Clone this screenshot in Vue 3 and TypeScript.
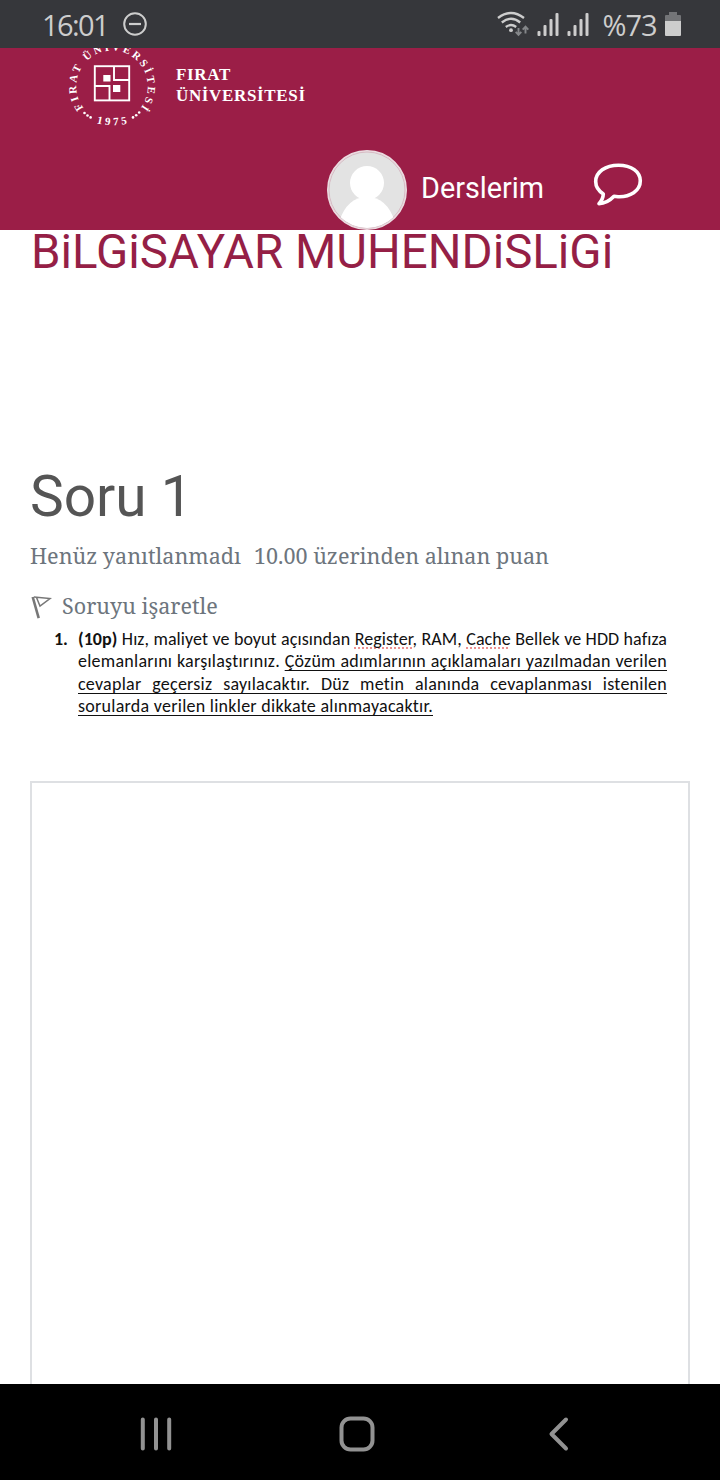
<script setup lang="ts">
const underlinedLines: string[] = [
  'cevaplar geçersiz sayılacaktır. Düz metin alanında cevaplanması istenilen',
  'sorularda verilen linkler dikkate alınmayacaktır.',
]

const signalBars = [
  { x: 0.5, h: 5 },
  { x: 6.5, h: 11 },
  { x: 12.5, h: 17 },
  { x: 18.5, h: 23 },
]
</script>

<template>
  <div class="screen">
    <div class="status">
      <span class="clock">16:01</span>
      <svg class="dnd" width="26" height="26" viewBox="0 0 26 26">
        <circle cx="13" cy="13" r="10.8" fill="none" stroke="#cdcdcd" stroke-width="2" />
        <path d="M7 13H19" stroke="#cdcdcd" stroke-width="2.2" />
      </svg>
      <svg class="wifi" width="34" height="28" viewBox="0 0 34 28">
        <g fill="none" stroke="#cdcdcd" stroke-width="2.3">
          <path d="M1 8Q14 -2 27 8" />
          <path d="M4.800 12.500Q14 5 23.200 12.500" />
          <path d="M8.800 17Q14 13 19.200 17" />
        </g>
        <circle cx="14" cy="20.200" r="1.900" fill="#cdcdcd" />
        <g fill="none" stroke="#85878a" stroke-width="1.900">
          <path d="M21.500 18V24.500M18.700 21.800L21.500 24.800L24.300 21.800" />
          <path d="M28.500 23.500V17M25.700 19.700L28.500 16.700L31.300 19.700" />
        </g>
      </svg>
      <svg v-for="n in 2" :key="n" class="signal" width="24" height="24" viewBox="0 0 24 24">
        <rect v-for="bar in signalBars" :key="bar.x" :x="bar.x" :y="24 - bar.h" width="3" :height="bar.h" rx="1" fill="#cdcdcd" />
      </svg>
      <span class="percent">%73</span>
      <svg class="battery" width="16" height="24" viewBox="0 0 16 24">
        <path d="M4 0H12V3H15Q16 3 16 4V9H0V4Q0 3 1 3H4Z" fill="#737477" />
        <path d="M0 9H16V23Q16 24 15 24H1Q0 24 0 23Z" fill="#cdcdcd" />
      </svg>
    </div>

    <header class="header">
      <div class="brand">
        <svg class="seal" width="100" height="84" viewBox="62 48 100 84">
          <defs>
            <path id="ringTop" d="M83.500 108A35.800 35.800 0 1 1 140.500 108" />
            <path id="ringBottom" d="M96.500 123.200A70 70 0 0 0 130 123.200" />
          </defs>
          <g fill="none" stroke="#fff" stroke-width="1.900">
            <rect x="94.800" y="66.200" width="34.400" height="34.200" />
            <path d="M114 66V80H129M109.500 101V86H95" />
          </g>
          <rect x="103.300" y="75" width="7.200" height="6.500" fill="#fff" />
          <rect x="113" y="85" width="7.300" height="7" fill="#fff" />
          <text class="ring-text">
            <textPath href="#ringTop" textLength="158" lengthAdjust="spacing">FIRAT ÜNİVERSİTESİ</textPath>
          </text>
          <text class="ring-text">
            <textPath href="#ringBottom" textLength="31" lengthAdjust="spacing">1975</textPath>
          </text>
          <g fill="#fff">
            <circle cx="84.500" cy="113" r="1.300" />
            <circle cx="87.500" cy="115.500" r="1.300" />
            <circle cx="90.600" cy="117.400" r="1.300" />
            <circle cx="133" cy="117.400" r="1.300" />
            <circle cx="136.200" cy="115.200" r="1.300" />
            <circle cx="139.200" cy="112.500" r="1.300" />
          </g>
        </svg>
        <div class="name">
          <div class="name-a">FIRAT</div>
          <div class="name-b">ÜNİVERSİTESİ</div>
        </div>
      </div>
      <div class="nav">
        <svg class="avatar" width="80" height="80" viewBox="0 0 80 80">
          <defs>
            <clipPath id="face"><circle cx="40" cy="40" r="38" /></clipPath>
          </defs>
          <circle cx="40" cy="40" r="39.300" fill="#e3e3e3" stroke="#ecdce1" stroke-width="1.400" />
          <circle cx="40" cy="40" r="38" fill="none" stroke="#cfa0af" stroke-width=".6" />
          <g clip-path="url(#face)" fill="#fff">
            <circle cx="40" cy="33" r="17" />
            <path d="M12 72Q20 47 40 47Q60 47 68 72V80H12Z" />
          </g>
        </svg>
        <span class="courses">Derslerim</span>
        <svg class="chat" width="50" height="44" viewBox="0 0 50 44">
          <path d="M25.500 2.200C38.500 2.200 47.300 8.800 47.300 17.800C47.300 28 37 34.200 25 33.700L21 33.300C17 37.500 11.500 40.500 6 40.700C8.500 38 10.200 34.800 10.300 31C5.800 28 2.700 24 2.700 18.500C2.700 9 12.500 2.200 25.500 2.200Z" fill="none" stroke="#fff" stroke-width="3.600" stroke-linejoin="round" />
        </svg>
      </div>
    </header>

    <main class="content">
      <h1 class="title">BiLGiSAYAR MUHENDiSLiGi</h1>
      <h2 class="question-no">Soru 1</h2>
      <div class="state"><span class="state-a">Henüz yanıtlanmadı</span><span class="state-b">10.00 üzerinden alınan puan</span></div>
      <div class="flag">
        <svg width="24" height="26" viewBox="0 0 24 26">
          <path d="M2.700 4L8.700 25.200" fill="none" stroke="#777" stroke-width="2.600" />
          <path d="M4 4L20 5.500L10 13L6.500 4.500" fill="none" stroke="#777" stroke-width="1.500" />
        </svg>
        <span class="flag-label">Soruyu işaretle</span>
      </div>
      <div class="question">
        <b class="num">1.</b>
        <div class="lines">
          <div class="line l1"><b>(10p)</b> Hız, maliyet ve boyut açısından <span class="typo">Register</span>, RAM, <span class="typo">Cache</span> Bellek ve HDD hafıza</div>
          <div class="line l2">elemanlarını karşılaştırınız. <u>Çözüm adımlarının açıklamaları yazılmadan verilen</u></div>
          <div v-for="(line, i) in underlinedLines" :key="i" class="line" :class="'l' + (i + 3)">
            <u>{{ line }}</u>
          </div>
        </div>
      </div>
      <div class="answer"></div>
    </main>

    <nav class="keys">
      <svg width="720" height="96" viewBox="0 0 720 96">
        <g fill="none" stroke="#929292" stroke-width="4" stroke-linecap="round">
          <path d="M142.800 35.500V64.500M156 35.500V64.500M169.200 35.500V64.500" />
          <rect x="341.500" y="34.500" width="31" height="31" rx="9" />
          <path d="M566 35.500L551.500 50L566 64.500" stroke-linejoin="round" />
        </g>
      </svg>
    </nav>
  </div>
</template>

<style>
body {
  margin: 0;
  background: #fff;
}
</style>

<style scoped>
.screen {
  width: 720px;
  height: 1480px;
  display: flex;
  flex-direction: column;
  overflow: hidden;
  background: #fff;
  font-family: Roboto, "Noto Sans", sans-serif;
}
.status {
  height: 48px;
  flex: none;
  display: flex;
  align-items: center;
  background: #36373b;
  color: #cdcdcd;
  font-family: "Open Sans", "Noto Sans", sans-serif;
  font-size: 29px;
  line-height: 46px;
}
.clock {
  width: 65px;
  margin: 1px 0 0 42px;
  letter-spacing: -1.600px;
  white-space: nowrap;
}
.dnd { margin-left: 15px; }
.wifi { margin-left: 348.500px; }
.signal { margin-left: 6px; }
.percent {
  width: 56px;
  margin: 1px 0 0 12px;
  letter-spacing: -1px;
  white-space: nowrap;
}
.battery { margin-left: 6px; }
.header {
  height: 182px;
  flex: none;
  display: flex;
  flex-direction: column;
  background: #9b1e47;
  color: #fff;
}
.brand {
  display: flex;
  height: 84px;
  margin-left: 62px;
}
.seal { flex: none; }
.ring-text {
  font: bold 11px "Liberation Serif", serif;
  fill: #fff;
}
.name {
  margin: 16px 0 0 14px;
  font: bold 17px/21px "Liberation Serif", serif;
  letter-spacing: .65px;
  white-space: nowrap;
}
.nav {
  display: flex;
  align-items: center;
  height: 80px;
  margin: 18px 0 0 327px;
}
.courses {
  width: 122px;
  margin: -4px 0 0 14px;
  font-size: 28.800px;
  white-space: nowrap;
}
.chat { margin: -11px 0 0 50px; }
.content {
  flex: 1;
  min-height: 0;
  display: flex;
  flex-direction: column;
  padding: 0 30px;
  overflow: hidden;
}
.title {
  margin: 0 0 0 1px;
  height: 56px;
  flex: none;
  color: #951f46;
  font-size: 47.400px;
  line-height: 45px;
  font-weight: 400;
  white-space: nowrap;
}
.question-no {
  margin: 175px 0 0;
  flex: none;
  color: #555;
  font-size: 56.800px;
  line-height: 72px;
  font-weight: 400;
}
.state, .flag {
  flex: none;
  display: flex;
  color: #6d757d;
  font-family: "Noto Serif", "DejaVu Serif Condensed", "DejaVu Serif", serif;
  font-size: 21.570px;
  white-space: nowrap;
}
.state {
  height: 30px;
  margin-top: 8px;
  line-height: 30px;
}
.state-b { margin-left: 13px; }
.flag {
  height: 30px;
  margin-top: 20px;
  line-height: 30px;
  align-items: center;
}
.flag-label { margin-left: 8px; }
.question {
  flex: none;
  display: flex;
  margin: 7px 0 0 24px;
  color: #111;
  font-family: Carlito, Lato, sans-serif;
  font-size: 18px;
  line-height: 22.400px;
  font-variant-ligatures: none;
}
.num { width: 24px; }
.lines { width: 589px; }
.line {
  height: 22.400px;
  white-space: nowrap;
  text-align: justify;
  text-align-last: justify;
  letter-spacing: .25px;
}
.l1 { letter-spacing: .06px; }
.l4 { width: 355px; }
u {
  text-decoration-thickness: 1.300px;
  text-underline-offset: 3px;
  text-decoration-skip-ink: none;
}
.typo {
  text-decoration: underline dotted #eb9090 1.500px;
  text-underline-offset: 2px;
  text-decoration-skip-ink: none;
}
.answer {
  flex: 1;
  box-sizing: border-box;
  margin-top: 63px;
  border: 2px solid #dee0e3;
  border-bottom: 0;
}
.keys {
  height: 96px;
  flex: none;
  background: #000;
}
.keys svg { display: block; }
</style>
